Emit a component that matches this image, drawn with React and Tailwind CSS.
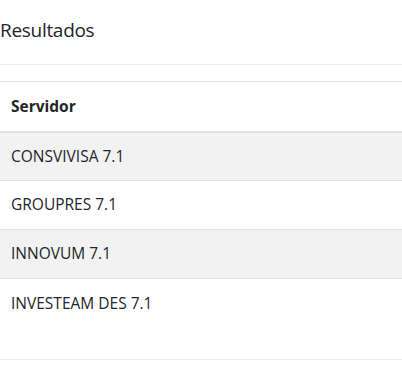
export default function App() {
  const servers = ["CONSVIVISA 7.1", "GROUPRES 7.1", "INNOVUM 7.1", "INVESTEAM DES 7.1"];
  return (
    <div
      className="w-[402px] h-[380px] bg-white text-[#212529] overflow-hidden"
      style={{ fontFamily: '"Segoe UI", "Open Sans", "Noto Sans", sans-serif' }}
    >
      <div className="h-[65px] flex items-center border-b border-[#e9ecef]">
        <h5 className="text-[19px] leading-[24px] -mt-[4px] tracking-[-0.3px]">Resultados</h5>
      </div>
      <div className="pt-[16px] pb-[31px]">
        <table className="w-full border-collapse text-[15.5px]">
          <thead>
            <tr className="border-t border-[#dee2e6] border-b-2">
              <th className="text-left font-bold px-[11px] h-[50px]">Servidor</th>
            </tr>
          </thead>
          <tbody>
            {servers.map((s, i) => (
              <tr
                key={s}
                className={`${i % 2 === 0 ? "bg-[#f2f2f2]" : "bg-white"} border-t border-[#dee2e6]`}
              >
                <td className="px-[11px] h-[49px]">{s}</td>
              </tr>
            ))}
          </tbody>
        </table>
      </div>
      <div className="border-t border-[#e9ecef]" />
    </div>
  );
}
